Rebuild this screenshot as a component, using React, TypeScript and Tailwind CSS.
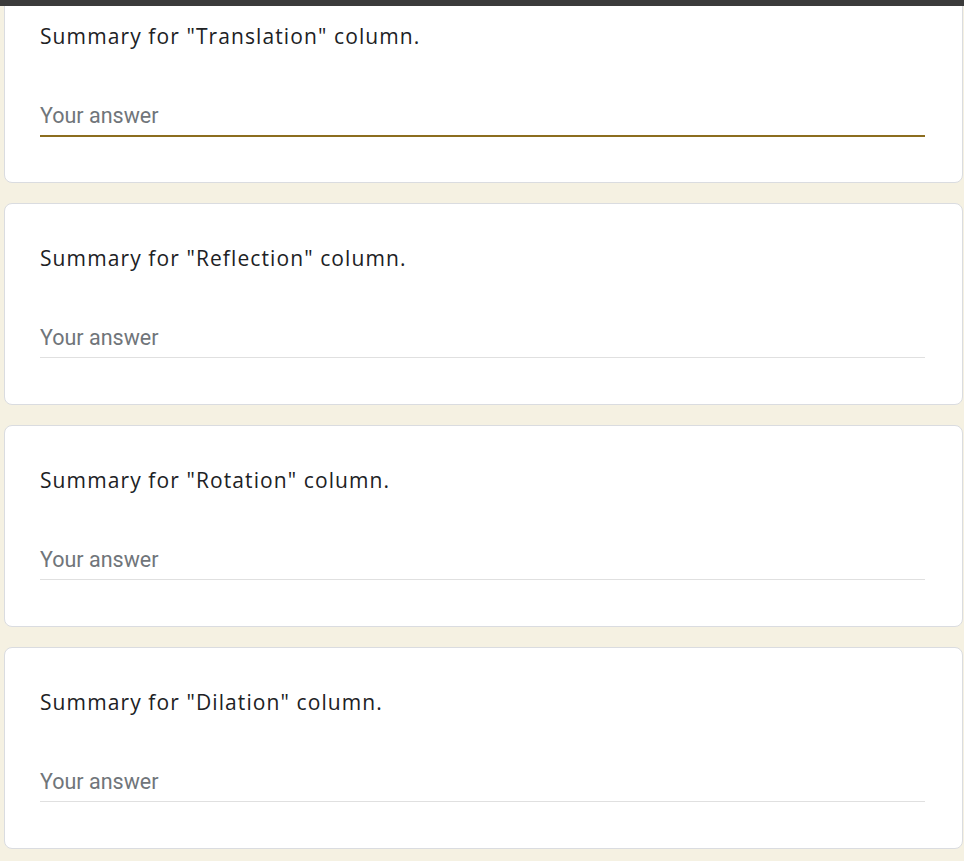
const questions = [
  { label: 'Summary for "Translation" column.', active: true },
  { label: 'Summary for "Reflection" column.' },
  { label: 'Summary for "Rotation" column.' },
  { label: 'Summary for "Dilation" column.' },
];

function QuestionCard({ label, active }: { label: string; active?: boolean }) {
  return (
    <div className="bg-white border border-[#dadce0] rounded-lg pl-[35px] pr-[37px] pt-[42px] pb-[45px]">
      <div className="text-[21px] leading-[24px] tracking-[1.1px] text-[#202124] font-['Open_Sans',sans-serif]">{label}</div>
      <div className="mt-[56px]">
        <div className="text-[21.5px] leading-[24px] text-[#70757a] font-['Roboto',sans-serif] pb-[7px]">Your answer</div>
        <div className="h-[2px]">
          <div className={active ? 'h-[2px] bg-[#8c6d1f]' : 'h-px bg-[#e0e0e0]'} />
        </div>
      </div>
    </div>
  );
}

export default function App() {
  return (
    <div className="w-[964px] h-[861px] overflow-hidden bg-[#f5f1e2]">
      <div className="h-[6px] bg-[#3b3b3b] relative z-10" />
      <div className="flex flex-col gap-[20px] pl-[4px] pr-[1px] -mt-[25px]">
        {questions.map((q) => (
          <QuestionCard key={q.label} label={q.label} active={q.active} />
        ))}
      </div>
    </div>
  );
}
